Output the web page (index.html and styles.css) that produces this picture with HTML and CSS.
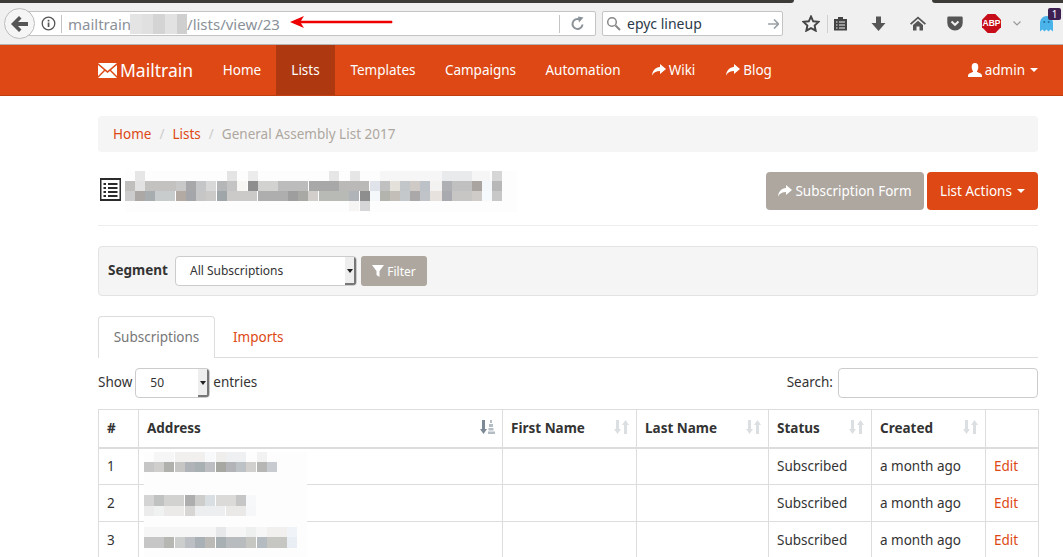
FILE: index.html
```html
<!DOCTYPE html>
<html lang="en">
<head>
	<meta charset="utf-8">
	<title>Mailtrain - General Assembly List 2017</title>
	<link rel="stylesheet" href="styles.css">
</head>
<body>

	<!-- browser chrome -->
	<div class="tabstrip">
		<div class="tabstrip-dark"></div>
		<div class="tabstrip-gap"></div>
		<div class="tabstrip-dark tabstrip-end"></div>
	</div>

	<div class="toolbar">
		<div class="back">
			<svg width="18" height="16" viewBox="0 0 18 16"><path d="M8 0 L0 8 L8 16 L10.5 13.5 L7 10 H17 V6 H7 L10.5 2.5 Z" fill="#555"/></svg>
		</div>
		<div class="urlbar">
			<svg class="info" width="15" height="15" viewBox="0 0 15 15"><circle cx="7.5" cy="7.5" r="6.3" fill="none" stroke="#555" stroke-width="1.3"/><rect x="6.7" y="6.5" width="1.7" height="4.5" fill="#555"/><rect x="6.7" y="3.8" width="1.7" height="1.7" fill="#555"/></svg>
			<span class="url-sep"></span>
			<span class="url-text">mailtrain</span>
			<svg class="url-blur" width="57" height="20" shape-rendering="crispEdges">
				<rect width="57" height="20" fill="#e4e4e4"/>
				<rect x="12" width="11" height="20" fill="#e0e0e0"/>
				<rect x="23" width="12" height="20" fill="#d4d4d4"/>
				<rect x="35" width="12" height="20" fill="#e2e2e2"/>
				<rect x="47" width="10" height="20" fill="#cfcfcf"/>
			</svg>
			<span class="url-text">/lists/view/23</span>
			<span class="url-fill"></span>
			<span class="url-sep"></span>
			<svg class="reload" width="15" height="15" viewBox="0 0 15 15"><path d="M12.5 8.5 A5 5 0 1 1 9.5 3.4" fill="none" stroke="#8a9299" stroke-width="2"/><path d="M8 0.5 L13.5 1.5 L9 6.5 Z" fill="#8a9299"/></svg>
		</div>
		<div class="searchbar">
			<svg width="15" height="15" viewBox="0 0 15 15"><circle cx="6" cy="6" r="4.3" fill="none" stroke="#888" stroke-width="1.5"/><path d="M9.5 9.5 L14 14" stroke="#888" stroke-width="2"/></svg>
			<span class="search-text">epyc lineup</span>
			<svg class="go" width="11" height="10" viewBox="0 0 11 10"><path d="M6 0.5 L10.5 5 L6 9.5 M0 5 H10" fill="none" stroke="#9aa2a8" stroke-width="1.7"/></svg>
		</div>
		<div class="tools">
			<svg class="tool-star" width="18" height="17" viewBox="0 0 18 17"><path d="M9 1.5 L11.2 6.3 L16.5 6.9 L12.6 10.5 L13.7 15.7 L9 13.1 L4.3 15.7 L5.4 10.5 L1.5 6.9 L6.8 6.3 Z" fill="none" stroke="#444" stroke-width="1.9"/></svg>
			<span class="tool-sep"></span>
			<svg class="tool-clip" width="15" height="15" viewBox="0 0 15 15"><path d="M1 3 H5 V1 H10 V3 H14 V14.5 H1 Z" fill="#444"/><path d="M3 6 H4.5 M6 6 H12 M3 9 H4.5 M6 9 H12 M3 12 H4.5 M6 12 H12" stroke="#f0f0f0" stroke-width="1.2"/></svg>
			<svg class="tool-down" width="15" height="16" viewBox="0 0 15 16"><path d="M5 0.5 H10 V7 H14.5 L7.5 15 L0.5 7 H5 Z" fill="#555"/></svg>
			<svg class="tool-home" width="16" height="15" viewBox="0 0 16 15"><path d="M8 0.5 L16 7.5 L14.8 8.8 L8 2.8 L1.2 8.8 L0 7.5 Z" fill="#555"/><path d="M3 9 L8 4.7 L13 9 V14.5 H9.5 V10.5 H6.5 V14.5 H3 Z" fill="#555"/></svg>
			<svg class="tool-pocket" width="16" height="15" viewBox="0 0 16 15"><path d="M1.5 0.5 H14.5 A1.2 1.2 0 0 1 15.7 1.7 V7 A7.7 7.5 0 0 1 0.3 7 V1.7 A1.2 1.2 0 0 1 1.5 0.5 Z" fill="#555"/><path d="M4.5 5.5 L8 8.8 L11.5 5.5" fill="none" stroke="#f0f0f0" stroke-width="2"/></svg>
			<div class="tool-abp">ABP</div>
			<svg class="tool-chev" width="8" height="5" viewBox="0 0 8 5"><path d="M0.5 0.5 L4 4 L7.5 0.5" fill="none" stroke="#999" stroke-width="1.2"/></svg>
			<div class="tool-ghost">
				<svg width="13" height="16" viewBox="0 0 13 16"><path d="M0 15.5 V6.5 A6.5 6.5 0 0 1 13 6.5 V15.5 L10.5 13.5 L8.5 15.5 L6.5 13.5 L4.5 15.5 L2.5 13.5 Z" fill="#4ab4ea"/><circle cx="4.3" cy="6" r="1" fill="#1d6fa0"/><circle cx="8.7" cy="6" r="1" fill="#1d6fa0"/></svg>
				<span class="ghost-badge">1</span>
			</div>
		</div>
		<svg class="annotation" width="103" height="14" viewBox="0 0 103 14"><path d="M0 7 L14 1 L11 5.7 L102 5.7 Q103 7 102 8.3 L11 8.3 L14 13 Z" fill="#ee0000"/></svg>
	</div>

	<!-- site navbar -->
	<div class="navbar">
		<div class="container nav-inner">
			<a class="brand">
				<svg width="19" height="15" viewBox="0 0 19 15"><path d="M0 0 H19 L9.5 8 Z" fill="#fff"/><path d="M0 2 L6 7 L0 13 Z M19 2 L13 7 L19 13 Z" fill="#fff"/><path d="M0 15 L7 8 L9.5 10 L12 8 L19 15 Z" fill="#fff"/></svg>
				Mailtrain
			</a>
			<a class="nav-item nav-home">Home</a>
			<a class="nav-item nav-active">Lists</a>
			<a class="nav-item nav-templates">Templates</a>
			<a class="nav-item nav-campaigns">Campaigns</a>
			<a class="nav-item nav-automation">Automation</a>
			<a class="nav-item nav-wiki">
				<svg class="share" width="14" height="12" viewBox="0 0 14 12"><path d="M8 0 L14 5 L8 10 V7 C4.5 7 2 8 0 11.5 C0.5 6.5 3.5 3.2 8 3 Z" fill="#fff"/></svg>
				Wiki
			</a>
			<a class="nav-item nav-blog">
				<svg class="share" width="14" height="12" viewBox="0 0 14 12"><path d="M8 0 L14 5 L8 10 V7 C4.5 7 2 8 0 11.5 C0.5 6.5 3.5 3.2 8 3 Z" fill="#fff"/></svg>
				Blog
			</a>
			<a class="nav-item nav-user">
				<svg width="14" height="14" viewBox="0 0 14 14"><path d="M7 0 C9.5 0 10.5 2 10.3 4.5 C10.1 6.5 9.2 8 8.8 8.6 C9.5 9.8 14 10 14 13 V14 H0 V13 C0 10 4.5 9.8 5.2 8.6 C4.8 8 3.9 6.5 3.7 4.5 C3.5 2 4.5 0 7 0 Z" fill="#fff"/></svg>
				admin
				<span class="caret"></span>
			</a>
		</div>
	</div>

	<div class="container">

		<ol class="breadcrumb">
			<li><a>Home</a></li>
			<li class="crumb-sep">/</li>
			<li><a>Lists</a></li>
			<li class="crumb-sep">/</li>
			<li class="crumb-active">General Assembly List 2017</li>
		</ol>

		<div class="page-head">
			<div class="page-title">
				<svg class="list-icon" width="21" height="23" viewBox="0 0 21 23"><rect width="21" height="23" fill="#2b2b2b"/><rect x="1.5" y="2" width="18" height="19" fill="#fff"/><path d="M3.5 6 H6 M8 6 H17.5 M3.5 10 H6 M8 10 H17.5 M3.5 14 H6 M8 14 H17.5 M3.5 18 H6 M8 18 H17.5" stroke="#2b2b2b" stroke-width="2"/></svg>
				<svg class="title-blur" width="392" height="41" shape-rendering="crispEdges">
					<rect width="392" height="41" fill="#fdfdfd"/>
					<rect x="10" y="0" width="10" height="10" fill="#e6e6e6"/>
					<rect x="102" y="0" width="10" height="10" fill="#e4e4e4"/>
					<rect x="123" y="0" width="10" height="10" fill="#ececec"/>
					<rect x="204" y="0" width="10" height="10" fill="#e6e6e6"/>
					<rect x="225" y="0" width="10" height="10" fill="#e6e6e6"/>
					<rect x="255" y="0" width="110" height="10" fill="#f6f6f6"/>
					<rect x="317" y="0" width="30" height="10" fill="#e8eaec"/>
					<rect x="367" y="0" width="10" height="10" fill="#d6d6d6"/>
					<rect x="0" y="10" width="10" height="10" fill="#c0bfbd"/>
					<rect x="10" y="10" width="10" height="10" fill="#e2e2e2"/>
					<rect x="20" y="10" width="31" height="10" fill="#c4c2c0"/>
					<rect x="51" y="10" width="10" height="10" fill="#c8c8c8"/>
					<rect x="61" y="10" width="10" height="10" fill="#a8a8aa"/>
					<rect x="71" y="10" width="10" height="10" fill="#c4c6c8"/>
					<rect x="81" y="10" width="10" height="10" fill="#d8d8d8"/>
					<rect x="92" y="10" width="10" height="10" fill="#b4b6b8"/>
					<rect x="102" y="10" width="10" height="10" fill="#c4c4c4"/>
					<rect x="112" y="10" width="10" height="10" fill="#f8f6f2"/>
					<rect x="123" y="10" width="10" height="10" fill="#8e8e8e"/>
					<rect x="133" y="10" width="20" height="10" fill="#d2d2d0"/>
					<rect x="153" y="10" width="30" height="10" fill="#bcbcbc"/>
					<rect x="184" y="10" width="30" height="10" fill="#a8a8a8"/>
					<rect x="214" y="10" width="30" height="10" fill="#bbb9b7"/>
					<rect x="245" y="10" width="10" height="10" fill="#e0e4ea"/>
					<rect x="255" y="10" width="10" height="10" fill="#c0c0c0"/>
					<rect x="265" y="10" width="10" height="10" fill="#e4e0da"/>
					<rect x="275" y="10" width="10" height="10" fill="#c2c6c8"/>
					<rect x="285" y="10" width="10" height="10" fill="#cfcac6"/>
					<rect x="295" y="10" width="10" height="10" fill="#bcc2c8"/>
					<rect x="305" y="10" width="12" height="10" fill="#f4f2f0"/>
					<rect x="317" y="10" width="10" height="10" fill="#aeb0b4"/>
					<rect x="327" y="10" width="20" height="10" fill="#c0c0c0"/>
					<rect x="347" y="10" width="10" height="10" fill="#aaa4a0"/>
					<rect x="357" y="10" width="10" height="10" fill="#f4f8fa"/>
					<rect x="367" y="10" width="10" height="10" fill="#b8b8b8"/>
					<rect x="0" y="20" width="10" height="10" fill="#cccccc"/>
					<rect x="10" y="20" width="10" height="10" fill="#aca8a6"/>
					<rect x="20" y="20" width="10" height="10" fill="#a8aeb0"/>
					<rect x="30" y="20" width="20" height="10" fill="#c8cccc"/>
					<rect x="51" y="20" width="10" height="10" fill="#b4aaa4"/>
					<rect x="61" y="20" width="10" height="10" fill="#a4a6aa"/>
					<rect x="71" y="20" width="10" height="10" fill="#c6c6c6"/>
					<rect x="81" y="20" width="10" height="10" fill="#cccac8"/>
					<rect x="92" y="20" width="10" height="10" fill="#9ea6aa"/>
					<rect x="102" y="20" width="30" height="10" fill="#cccac8"/>
					<rect x="133" y="20" width="30" height="10" fill="#aeaeae"/>
					<rect x="163" y="20" width="10" height="10" fill="#9e9e9e"/>
					<rect x="173" y="20" width="10" height="10" fill="#a8a8a4"/>
					<rect x="183" y="20" width="10" height="10" fill="#d2cecc"/>
					<rect x="194" y="20" width="30" height="10" fill="#b8bab6"/>
					<rect x="224" y="20" width="10" height="10" fill="#b0b4b8"/>
					<rect x="235" y="20" width="10" height="10" fill="#8e8e8e"/>
					<rect x="245" y="20" width="10" height="10" fill="#f4f8fa"/>
					<rect x="255" y="20" width="10" height="10" fill="#b4b4ae"/>
					<rect x="265" y="20" width="10" height="10" fill="#c4beb8"/>
					<rect x="275" y="20" width="10" height="10" fill="#c4c8ca"/>
					<rect x="285" y="20" width="10" height="10" fill="#aaa8a8"/>
					<rect x="295" y="20" width="10" height="10" fill="#c0c4c8"/>
					<rect x="305" y="20" width="12" height="10" fill="#e8e2de"/>
					<rect x="317" y="20" width="10" height="10" fill="#a8aab0"/>
					<rect x="327" y="20" width="20" height="10" fill="#c8c6c4"/>
					<rect x="347" y="20" width="10" height="10" fill="#cfcbc8"/>
					<rect x="357" y="20" width="10" height="10" fill="#f6fafc"/>
					<rect x="367" y="20" width="10" height="10" fill="#c8c8c8"/>
					<rect x="224" y="30" width="10" height="10" fill="#f6f5f3"/>
					<rect x="235" y="30" width="10" height="10" fill="#d6d6d8"/>
				</svg>
			</div>
			<div class="page-actions">
				<a class="btn btn-default btn-large">
					<svg class="share" width="14" height="12" viewBox="0 0 14 12"><path d="M8 0 L14 5 L8 10 V7 C4.5 7 2 8 0 11.5 C0.5 6.5 3.5 3.2 8 3 Z" fill="#fff"/></svg>
					Subscription Form
				</a>
				<a class="btn btn-primary btn-large">List Actions <span class="caret"></span></a>
			</div>
		</div>

		<hr class="rule">

		<div class="well">
			<label class="well-label">Segment</label>
			<div class="select select-segment">
				<span class="select-value">All Subscriptions</span>
				<span class="select-arrow"></span>
			</div>
			<a class="btn btn-default btn-small">
				<svg width="12" height="12" viewBox="0 0 12 12"><path d="M0 0 H12 L7.5 6 V12 L4.5 10 V6 Z" fill="#fff"/></svg>
				Filter
			</a>
		</div>

		<ul class="tabs">
			<li class="tab tab-active">Subscriptions</li>
			<li class="tab">Imports</li>
		</ul>

		<div class="table-tools">
			<div class="length">
				<span class="tool-label">Show</span>
				<div class="select select-length">
					<span class="select-value">50</span>
					<span class="select-arrow"></span>
				</div>
				<span class="tool-label">entries</span>
			</div>
			<div class="search">
				<span class="tool-label">Search:</span>
				<input class="search-input" type="text">
			</div>
		</div>

		<div class="table-wrap">
			<table class="table">
				<thead>
					<tr>
						<th class="col-num">#</th>
						<th class="col-address">Address
							<svg class="sort sort-on" width="15" height="14" viewBox="0 0 15 14"><path d="M2 0 H5 V9 H7 L3.5 14 L0 9 H2 Z" fill="#7d8a96"/><path d="M10 0 H12 V3 H10 Z M9 4 H13 V7 H9 Z M8.5 8 H13.5 V10.5 H8.5 Z M8 11.5 H15 V14 H8 Z" fill="#b4bcc4"/></svg>
						</th>
						<th class="col-first">First Name
							<svg class="sort" width="15" height="14" viewBox="0 0 15 14"><path d="M2 0 H5 V9 H7 L3.5 14 L0 9 H2 Z M10 14 H13 V5 H15 L11.5 0 L8 5 H10 Z" fill="#dcdfe2"/></svg>
						</th>
						<th class="col-last">Last Name
							<svg class="sort" width="15" height="14" viewBox="0 0 15 14"><path d="M2 0 H5 V9 H7 L3.5 14 L0 9 H2 Z M10 14 H13 V5 H15 L11.5 0 L8 5 H10 Z" fill="#dcdfe2"/></svg>
						</th>
						<th class="col-status">Status
							<svg class="sort" width="15" height="14" viewBox="0 0 15 14"><path d="M2 0 H5 V9 H7 L3.5 14 L0 9 H2 Z M10 14 H13 V5 H15 L11.5 0 L8 5 H10 Z" fill="#dcdfe2"/></svg>
						</th>
						<th class="col-created">Created
							<svg class="sort" width="15" height="14" viewBox="0 0 15 14"><path d="M2 0 H5 V9 H7 L3.5 14 L0 9 H2 Z M10 14 H13 V5 H15 L11.5 0 L8 5 H10 Z" fill="#dcdfe2"/></svg>
						</th>
						<th class="col-edit"></th>
					</tr>
				</thead>
				<tbody>
					<tr><td>1</td><td></td><td></td><td></td><td>Subscribed</td><td>a month ago</td><td><a>Edit</a></td></tr>
					<tr><td>2</td><td></td><td></td><td></td><td>Subscribed</td><td>a month ago</td><td><a>Edit</a></td></tr>
					<tr><td>3</td><td></td><td></td><td></td><td>Subscribed</td><td>a month ago</td><td><a>Edit</a></td></tr>
				</tbody>
			</table>

			<!-- redacted addresses, sits over the row lines -->
			<svg class="address-blur" width="163" height="112" shape-rendering="crispEdges">
				<rect width="163" height="112" fill="#fdfdfd"/>
				<rect x="10" y="0" width="20" height="10" fill="#f6f6f6"/>
				<rect x="31" y="0" width="30" height="10" fill="#f2f0ee"/>
				<rect x="61" y="0" width="10" height="10" fill="#f8f9fa"/>
				<rect x="72" y="0" width="20" height="10" fill="#f0eeec"/>
				<rect x="82" y="0" width="20" height="10" fill="#eef0f2"/>
				<rect x="113" y="0" width="10" height="10" fill="#f2f2f2"/>
				<rect x="0" y="10" width="10" height="10" fill="#c6c6c6"/>
				<rect x="10" y="10" width="10" height="10" fill="#cfcecc"/>
				<rect x="20" y="10" width="10" height="10" fill="#b0b0ac"/>
				<rect x="31" y="10" width="10" height="10" fill="#c6c6c4"/>
				<rect x="41" y="10" width="10" height="10" fill="#b0b4b8"/>
				<rect x="51" y="10" width="10" height="10" fill="#a9b0b4"/>
				<rect x="61" y="10" width="10" height="10" fill="#bcbec2"/>
				<rect x="72" y="10" width="10" height="10" fill="#a8a8a2"/>
				<rect x="82" y="10" width="10" height="10" fill="#b2b4b8"/>
				<rect x="92" y="10" width="10" height="10" fill="#bcc2c6"/>
				<rect x="102" y="10" width="10" height="10" fill="#d2d0ce"/>
				<rect x="113" y="10" width="10" height="10" fill="#b6b6b4"/>
				<rect x="123" y="10" width="10" height="10" fill="#c8ccd0"/>
				<rect x="0" y="43" width="10" height="11" fill="#d4d4d4"/>
				<rect x="10" y="43" width="10" height="11" fill="#c0c2c2"/>
				<rect x="20" y="43" width="20" height="11" fill="#d2d2d0"/>
				<rect x="41" y="43" width="10" height="11" fill="#aeaeae"/>
				<rect x="51" y="43" width="10" height="11" fill="#cdcdcb"/>
				<rect x="61" y="43" width="10" height="11" fill="#d8dee2"/>
				<rect x="72" y="43" width="20" height="11" fill="#dcdad8"/>
				<rect x="92" y="43" width="10" height="11" fill="#c6c6c6"/>
				<rect x="102" y="43" width="10" height="11" fill="#f6f8fa"/>
				<rect x="0" y="54" width="10" height="10" fill="#ececec"/>
				<rect x="10" y="54" width="10" height="10" fill="#f0f2f2"/>
				<rect x="20" y="54" width="20" height="10" fill="#ebeae8"/>
				<rect x="41" y="54" width="10" height="10" fill="#d8d6d4"/>
				<rect x="51" y="54" width="30" height="10" fill="#eceeef"/>
				<rect x="82" y="54" width="20" height="10" fill="#ebe9e7"/>
				<rect x="102" y="54" width="10" height="10" fill="#f6f7f8"/>
				<rect x="0" y="75" width="133" height="10" fill="#f6f6f6"/>
				<rect x="72" y="75" width="10" height="10" fill="#e6e8ea"/>
				<rect x="102" y="75" width="10" height="10" fill="#eef0f0"/>
				<rect x="123" y="75" width="20" height="10" fill="#f2f0ee"/>
				<rect x="143" y="75" width="10" height="10" fill="#f0f4f8"/>
				<rect x="0" y="85" width="20" height="11" fill="#c6c6c6"/>
				<rect x="20" y="85" width="10" height="11" fill="#b6b6b2"/>
				<rect x="31" y="85" width="10" height="11" fill="#cccece"/>
				<rect x="41" y="85" width="10" height="11" fill="#bcc0c4"/>
				<rect x="51" y="85" width="10" height="11" fill="#a9b0b6"/>
				<rect x="61" y="85" width="10" height="11" fill="#bcbab6"/>
				<rect x="72" y="85" width="10" height="11" fill="#a8b0b4"/>
				<rect x="82" y="85" width="20" height="11" fill="#b8bcbe"/>
				<rect x="102" y="85" width="10" height="11" fill="#c6c6c2"/>
				<rect x="113" y="85" width="10" height="11" fill="#b4bcc2"/>
				<rect x="123" y="85" width="20" height="11" fill="#c6c6c2"/>
				<rect x="143" y="85" width="10" height="11" fill="#e8eef4"/>
			</svg>
		</div>

	</div>

</body>
</html>
```

FILE: styles.css
```css
html,body {
	margin:0;
	padding:0;
	height:100%;
	overflow:hidden;
	}
body {
	background-color:#fff;
	font-family:"Noto Sans",sans-serif;
	font-size:13.5px;
	color:#333;
	}
a {
	color:#dd4814;
	text-decoration:none;
	}
svg {
	display:block;
	flex:none;
	}

/* browser chrome */
.tabstrip {
	display:flex;
	height:3px;
	background-color:#f0f0f0;
	}
.tabstrip-dark {
	width:794px;
	background-color:#3c3b37;
	border-bottom-right-radius:4px;
	}
.tabstrip-gap {
	width:138px;
	}
.tabstrip-end {
	width:131px;
	border-bottom-right-radius:0;
	border-bottom-left-radius:4px;
	}
.toolbar {
	position:relative;
	display:flex;
	align-items:center;
	height:42px;
	box-sizing:border-box;
	padding-left:4px;
	background-color:#f0f0f0;
	border-bottom:1px solid #b4b4b4;
	}
.back {
	display:flex;
	align-items:center;
	justify-content:center;
	z-index:1;
	width:31px;
	height:31px;
	box-sizing:border-box;
	margin-right:-15px;
	border:1px solid #bdbdbd;
	border-radius:50%;
	background-color:#f5f5f5;
	}
.urlbar {
	display:flex;
	align-items:center;
	width:576px;
	height:25px;
	box-sizing:border-box;
	padding-left:20px;
	background-color:#fff;
	border:1px solid #c4c4c4;
	border-radius:2px;
	}
.info {
	margin-right:5px;
	}
.url-sep {
	width:1px;
	height:18px;
	background-color:#c4c4c4;
	}
.url-text {
	color:#8a9199;
	font-size:15px;
	}
.urlbar .url-sep:nth-of-type(1) {
	margin-right:6px;
	}
.url-blur {
	margin-left:-1px;
	}
.url-fill {
	flex:1;
	}
.reload {
	margin:0 10px;
	}
.searchbar {
	display:flex;
	align-items:center;
	width:181px;
	height:25px;
	box-sizing:border-box;
	margin-left:6px;
	padding:0 3px 0 3px;
	background-color:#fff;
	border:1px solid #c4c4c4;
	border-radius:2px;
	}
.search-text {
	flex:1;
	margin-left:6px;
	font-size:14px;
	color:#2b3a4a;
	}
.tools {
	display:flex;
	align-items:center;
	margin-left:19px;
	}
.tool-sep {
	width:1px;
	height:18px;
	margin:0 5px 0 7px;
	background-color:#d0d0d0;
	}
.tool-down {
	margin-left:23px;
	}
.tool-home {
	margin-left:24px;
	}
.tool-pocket {
	margin-left:21px;
	}
.tool-abp {
	width:19px;
	height:19px;
	margin-left:19px;
	clip-path:polygon(30% 0,70% 0,100% 30%,100% 70%,70% 100%,30% 100%,0 70%,0 30%);
	background-color:#c70d19;
	color:#fff;
	font-family:"Liberation Sans",sans-serif;
	font-size:8.5px;
	font-weight:bold;
	line-height:19px;
	text-align:center;
	}
.tool-chev {
	margin-left:12px;
	}
.tool-ghost {
	position:relative;
	margin-left:19px;
	}
.ghost-badge {
	position:absolute;
	top:-8px;
	left:8px;
	width:13px;
	height:12px;
	border-radius:2px;
	background-color:#3d1f52;
	color:#fff;
	font-size:10px;
	line-height:12px;
	text-align:center;
	}
.annotation {
	position:absolute;
	top:12px;
	left:290px;
	}

/* navbar */
.container {
	width:940px;
	margin-left:98px;
	}
.navbar {
	height:51px;
	box-sizing:border-box;
	background-color:#dd4814;
	border-bottom:1px solid #bf3e11;
	}
.nav-inner {
	display:flex;
	height:50px;
	}
.nav-inner a {
	color:#fff;
	}
.brand {
	display:flex;
	align-items:center;
	gap:3px;
	width:110px;
	font-size:17.5px;
	}
.nav-item {
	display:flex;
	align-items:center;
	justify-content:center;
	gap:3px;
	}
.nav-home {
	width:68px;
	}
.nav-active {
	width:59px;
	background-color:#ae3910;
	}
.nav-templates {
	width:96px;
	}
.nav-campaigns {
	width:99px;
	}
.nav-automation {
	width:106px;
	}
.nav-wiki {
	width:75px;
	}
.nav-blog {
	width:76px;
	}
.nav-user {
	margin-left:auto;
	}
.caret {
	display:inline-block;
	width:0;
	height:0;
	margin-left:2px;
	border-top:4px solid #fff;
	border-left:4px solid transparent;
	border-right:4px solid transparent;
	}

/* page */
.breadcrumb {
	display:flex;
	align-items:center;
	gap:8px;
	height:36px;
	box-sizing:border-box;
	margin:20px 0 0 0;
	padding:0 15px;
	list-style:none;
	background-color:#f5f5f5;
	border-radius:4px;
	}
.crumb-sep {
	color:#ccc;
	}
.crumb-active {
	color:#aea79f;
	}
.page-head {
	display:flex;
	justify-content:space-between;
	margin-top:18px;
	height:43px;
	}
.page-title {
	display:flex;
	align-items:flex-start;
	gap:4px;
	padding-left:2px;
	}
.list-icon {
	margin-top:8px;
	}
.title-blur {
	margin-top:1px;
	}
.page-actions {
	display:flex;
	gap:3px;
	margin-top:2px;
	}
.btn {
	display:flex;
	align-items:center;
	justify-content:center;
	gap:3px;
	box-sizing:border-box;
	border-radius:4px;
	color:#fff;
	}
.btn-large {
	height:38px;
	padding-bottom:1px;
	}
.btn-default {
	background-color:#aea79f;
	}
.btn-primary {
	background-color:#dd4814;
	}
.page-actions .btn-default {
	width:158px;
	}
.page-actions .btn-primary {
	width:111px;
	}
.btn-small {
	width:66px;
	height:30px;
	border-radius:3px;
	font-size:12px;
	}
.rule {
	height:1px;
	margin:12px 0 20px 0;
	border:0;
	background-color:#eee;
	}
.well {
	display:flex;
	align-items:center;
	height:50px;
	box-sizing:border-box;
	padding-left:9px;
	background-color:#f5f5f5;
	border:1px solid #e3e3e3;
	border-radius:4px;
	}
.well-label {
	width:67px;
	padding-bottom:3px;
	font-weight:bold;
	}
.select {
	display:flex;
	align-items:stretch;
	height:30px;
	box-sizing:border-box;
	background-color:#fff;
	border:1px solid #ccc;
	border-radius:4px;
	overflow:hidden;
	}
.select-value {
	flex:1;
	padding-left:14px;
	font-size:12px;
	line-height:28px;
	}
.select-arrow {
	position:relative;
	width:11px;
	background-color:#eee;
	border-right:2px solid #777;
	border-bottom:2px solid #777;
	box-sizing:border-box;
	}
.select-arrow::after {
	content:"";
	position:absolute;
	top:12px;
	left:2px;
	border-top:4px solid #222;
	border-left:3px solid transparent;
	border-right:3px solid transparent;
	}
.select-segment {
	width:182px;
	margin-right:4px;
	}
.tabs {
	display:flex;
	height:42px;
	box-sizing:border-box;
	margin:20px 0 0 0;
	padding:0;
	list-style:none;
	border-bottom:1px solid #ddd;
	}
.tab {
	height:41px;
	box-sizing:border-box;
	padding:0 15px 0 18px;
	line-height:42px;
	color:#dd4814;
	}
.tab-active {
	width:117px;
	height:42px;
	padding:0;
	line-height:40px;
	text-align:center;
	background-color:#fff;
	color:#777;
	border:1px solid #ddd;
	border-bottom:0;
	border-radius:4px 4px 0 0;
	}
.table-tools {
	display:flex;
	justify-content:space-between;
	margin-top:10px;
	height:30px;
	}
.length,
.search {
	display:flex;
	align-items:center;
	gap:3px;
	}
.search {
	gap:5px;
	}
.tool-label {
	padding-bottom:2px;
	}
.select-length {
	width:75px;
	}
.search-input {
	width:200px;
	height:30px;
	box-sizing:border-box;
	padding:0;
	background-color:#fff;
	border:1px solid #ccc;
	border-radius:4px;
	}
.table-wrap {
	position:relative;
	margin-top:11px;
	}
.table {
	width:940px;
	table-layout:fixed;
	border-collapse:collapse;
	}
.table th,
.table td {
	box-sizing:border-box;
	height:37px;
	padding:0 8px 1px 8px;
	border:1px solid #ddd;
	text-align:left;
	}
.table th {
	position:relative;
	height:38px;
	padding-bottom:0;
	border-bottom-width:2px;
	}
.col-num {
	width:40px;
	}
.col-address {
	width:364px;
	}
.col-first {
	width:134px;
	}
.col-last {
	width:132px;
	}
.col-status {
	width:103px;
	}
.col-created {
	width:114px;
	}
.col-edit {
	width:53px;
	}
.sort {
	position:absolute;
	top:10px;
	right:7px;
	}
.address-blur {
	position:absolute;
	top:43px;
	left:46px;
	}
```
